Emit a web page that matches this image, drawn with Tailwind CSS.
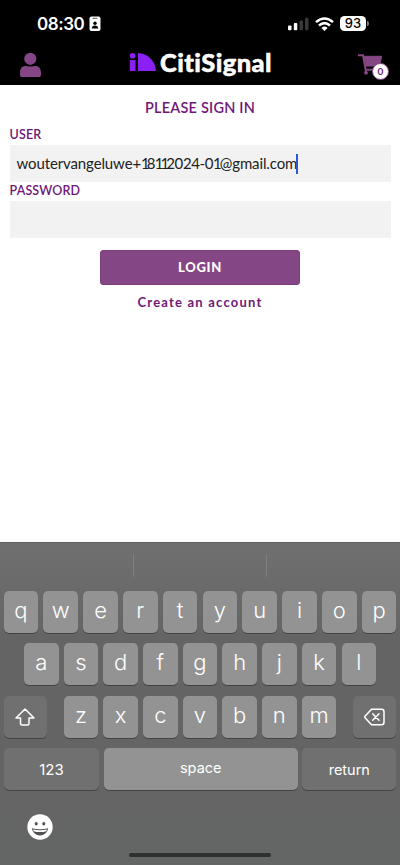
<!DOCTYPE html>
<html lang="en">
<head>
<meta charset="utf-8">
<meta name="viewport" content="width=device-width, initial-scale=1">
<title>CitiSignal</title>
<script src="https://cdn.jsdelivr.net/npm/@tailwindcss/browser@4"></script>
</head>
<body class="w-[400px] h-[865px] overflow-hidden bg-white flex flex-col font-['Lato',sans-serif]">
<header class="h-[84.5px] shrink-0 bg-black text-white flex flex-col">
  <div class="h-[47px] shrink-0 flex items-center pl-[37px] pr-[31px]">
    <span class="w-[48px] text-[17px] leading-[20px] font-semibold tracking-[-0.45px] font-['Inter',sans-serif] whitespace-nowrap">08:30</span>
    <svg class="ml-[4px] w-[12px] h-[16px]" viewBox="0 0 12 16"><rect x=".5" y=".5" width="11" height="14.5" rx="2" fill="#fff"/><rect x="3.5" y="1.8" width="5" height="1.2" rx=".6" fill="#777"/><circle cx="6" cy="7.2" r="1.7"/><path d="M2.7 12.4c.2-2 1.5-3 3.3-3s3.100 1 3.300 3z"/></svg>
    <svg class="ml-auto w-[21px] h-[14px]" viewBox="0 0 21 14"><rect x="0" y="8.500" width="3.500" height="4.800" rx="1" fill="#fff"/><rect x="5.800" y="6" width="3.500" height="7.300" rx="1" fill="#fff"/><rect x="11.500" y="3.500" width="3.500" height="9.800" rx="1" fill="#393939"/><rect x="17" y=".8" width="3.500" height="12.500" rx="1" fill="#393939"/></svg>
    <svg class="ml-[6px] w-[19px] h-[14px]" viewBox="0 0 19 14" fill="none" stroke="#fff" stroke-width="2.500"><path d="M1 5.100Q9.500-2.200 18 5.100"/><path d="M4 8.500Q9.500 3.800 15 8.500"/><path d="M6.400 10.900Q9.500 8.300 12.600 10.900L9.500 13.900Z" fill="#fff" stroke="none"/></svg>
    <div class="ml-[6px] w-[26px] h-[15px] rounded-[4.500px] bg-white text-black text-[13px] leading-[15px] text-center font-medium font-['Inter',sans-serif]">93</div>
    <div class="ml-[1px] w-[2px] h-[5px] rounded-r-full bg-[#777]"></div>
  </div>
  <div class="h-[37px] flex items-start pl-[19px] pr-[11px]">
    <svg class="mt-[5px] w-[23px] h-[26px]" viewBox="0 0 23 26" fill="#854685"><circle cx="11.300" cy="6.800" r="6.100"/><path d="M1 21c0-4.500 2-6.900 5.500-6.900 1.700 0 2.500.5 4.900.5s3.200-.5 4.900-.5c3.500 0 5.700 2.400 5.700 6.900v2.200q0 1.800-1.800 1.800H2.800Q1 25 1 23.200z"/></svg>
    <svg class="mt-[5px] ml-[87px] w-[28px] h-[20px]" viewBox="0 0 28 20" fill="#8b20f5"><circle cx="3.600" cy="3.700" r="2.800"/><rect x=".8" y="8" width="5.700" height="11"/><path d="M9 1c9.200.2 17.500 7.500 17.900 18H9z"/></svg>
    <span class="mt-[1px] ml-[3px] w-[112px] text-[25.500px] leading-[28px] font-black tracking-[0.4px] whitespace-nowrap [-webkit-text-stroke:0.500px_white]">CitiSignal</span>
    <div class="relative ml-auto mt-[6px] w-[31px] h-[28px]">
      <svg class="w-[31px] h-[28px]" viewBox="0 0 31 28" fill="none" stroke="#854685" stroke-width="2"><path d="M0 2.300H5L7.700 16.800H21"/><path d="M6.200 3.300H23.700L21.500 13H8z" fill="#854685" stroke-width="1"/><path d="M7.800 17v2.800"/><circle cx="8" cy="19.800" r="1.900" fill="#854685" stroke="none"/></svg>
      <div class="absolute left-[14px] top-[10px] w-[17px] h-[17px] rounded-full border-[1.500px] border-[#854685] bg-white text-[#6b2070] text-[10px] leading-[14px] font-bold text-center">0</div>
    </div>
  </div>
</header>
<main class="h-[457.500px] shrink-0 flex flex-col px-[9.500px] text-[#701878]">
  <h1 class="mt-[13.500px] h-[20px] text-center text-[14.500px] leading-[20px] font-semibold tracking-[0.2px] whitespace-nowrap">PLEASE SIGN IN</h1>
  <label class="mt-[9px] h-[18px] text-[12.500px] leading-[16px] font-semibold tracking-[0.2px]">USER</label>
  <div class="h-[37px] w-[381px] bg-[#f2f2f2] flex items-center pl-[7px] text-[#222]"><span class="w-[279.500px] whitespace-nowrap text-[15px] tracking-[-0.12px]">woutervangeluwe+<span class="tracking-[-2.900px]">1</span><span class="tracking-[-0.900px]">8</span><span class="tracking-[-2.900px]">11</span><span class="tracking-[-0.400px]">2024-0</span><span class="tracking-[-1.900px]">1</span>@gmail.com</span><i class="w-[1.500px] h-[20px] bg-[#2859dc]"></i></div>
  <label class="h-[19px] text-[12.500px] leading-[17px] font-semibold tracking-[0.15px]">PASSWORD</label>
  <div class="h-[37px] w-[381px] bg-[#f2f2f2]"></div>
  <button class="mt-[12px] self-center w-[200px] h-[35px] rounded-[3px] bg-[#854685] border border-[#7d3d7e] text-white text-[13px] leading-[33px] font-black tracking-[0.700px]">LOGIN</button>
  <a class="mt-[7px] self-center h-[20px] text-[13px] leading-[20px] font-bold tracking-[1.200px] whitespace-nowrap">Create an account</a>
</main>
<section class="h-[323px] shrink-0 bg-linear-to-b from-[#707070] via-[#646464] via-30% to-[#646565] border-t border-[#606060] flex flex-col text-white font-['Inter',sans-serif] font-light text-[22px] leading-[39px] text-center [&_.key]:rounded-[5px] [&_.key]:h-[42px] [&_.key]:shadow-[0_1px_0_#444]">
  <div class="h-[48px] shrink-0 pt-[11px] flex justify-center gap-[132px]"><i class="w-px h-[23px] bg-[#808080]"></i><i class="w-px h-[23px] bg-[#808080]"></i></div>
  <div class="px-[3.700px] grid grid-cols-10 gap-x-[5.300px] [&>*]:bg-[#939393]"><div class="key">q</div><div class="key">w</div><div class="key">e</div><div class="key">r</div><div class="key">t</div><div class="key">y</div><div class="key">u</div><div class="key">i</div><div class="key">o</div><div class="key">p</div></div>
  <div class="mt-[10.300px] px-[24px] grid grid-cols-9 gap-x-[5.200px] [&>*]:bg-[#939393]"><div class="key">a</div><div class="key">s</div><div class="key">d</div><div class="key">f</div><div class="key">g</div><div class="key">h</div><div class="key">j</div><div class="key">k</div><div class="key">l</div></div>
  <div class="mt-[10.300px] px-[3.700px] flex justify-between">
    <div class="key w-[43.500px] bg-[#707070] flex items-center justify-center"><svg class="w-[20px] h-[18px]" viewBox="0 0 20 18" fill="none" stroke="#fff" stroke-width="1.500" stroke-linejoin="round"><path d="M10 1L1 10H5.500V15.500Q5.500 17 7 17H12.500Q14 17 14 15.500V10H19Z"/></svg></div>
    <div class="w-[272.500px] grid grid-cols-7 gap-x-[5.200px] [&>*]:bg-[#939393]"><div class="key">z</div><div class="key">x</div><div class="key">c</div><div class="key">v</div><div class="key">b</div><div class="key">n</div><div class="key">m</div></div>
    <div class="key w-[43.500px] bg-[#707070] flex items-center justify-center"><svg class="w-[21px] h-[18px]" viewBox="0 0 21 18" fill="none" stroke="#fff" stroke-width="1.500" stroke-linejoin="round" stroke-linecap="round"><path d="M7.500 1.200H17.500Q20 1.200 20 3.700V14.300Q20 16.800 17.500 16.800H7.500L1 9.700Q.5 9 1 8.300Z"/><path d="M8.700 5.700L15 12.300M15 5.700L8.700 12.300"/></svg></div>
  </div>
  <div class="mt-[10.300px] px-[3.700px] flex justify-between text-[15px] font-normal">
    <div class="key w-[95.500px] bg-[#707070] leading-[43px]">123</div><div class="key w-[193.700px] bg-[#939393] leading-[40px] text-[14.500px]">space</div><div class="key w-[94px] bg-[#707070] leading-[43px] text-[14.500px]">return</div>
  </div>
  <svg class="mt-[24.500px] ml-[26.500px] w-[26px] h-[26px] shrink-0" viewBox="0 0 26 26"><circle cx="13" cy="13" r="12.700" fill="#fff"/><ellipse cx="9.200" cy="9.800" rx="1.500" ry="1.800" fill="#505050"/><ellipse cx="16.800" cy="9.800" rx="1.500" ry="1.800" fill="#505050"/><path d="M4.800 14.300Q13 16.200 21.200 14.300C20.200 19 17 21.400 13 21.400S5.800 19 4.800 14.300Z" fill="#505050"/><path d="M6 15.600Q13 17.100 20 15.600L19.300 17.200Q13 19 6.700 17.200Z" fill="#fff"/></svg>
  <div class="mt-auto mb-[8px] mx-auto w-[142px] h-[4px] rounded-full bg-[#303030]"></div>
</section>
</body>
</html>
